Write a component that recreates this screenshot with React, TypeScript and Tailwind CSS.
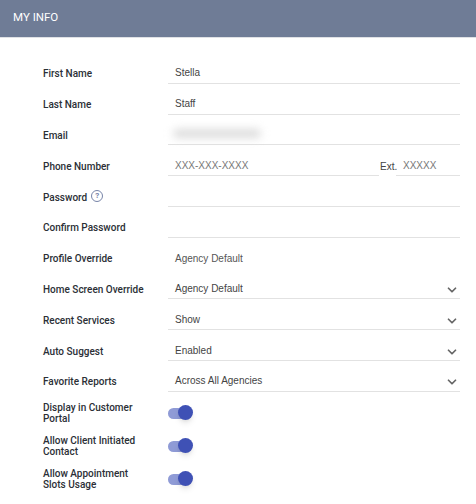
import { ChevronDown } from "lucide-react";

const valueText = "text-[10px] font-['Liberation_Sans',sans-serif]";

function Field({ label, children, icon }: { label: string; children?: React.ReactNode; icon?: boolean }) {
  return (
    <div className="flex h-[30.8px] items-stretch">
      <div className="flex w-[125px] items-center gap-[4px] pt-[11px] text-[10px] font-medium text-[#2b2f36]">
        {label}
        {icon && (
          <span className="mb-[2px] flex h-[12px] w-[12px] items-center justify-center rounded-full border-[1.5px] border-[#7784a8] text-[8px] font-bold text-[#7784a8]">
            ?
          </span>
        )}
      </div>
      {children ?? <div className="flex-1 border-b border-[#e2e2e2]" />}
    </div>
  );
}

function TextValue({ value, muted }: { value?: string; muted?: boolean }) {
  return (
    <div className={`flex flex-1 items-center border-b border-[#e2e2e2] pl-[7px] pt-[10px] ${valueText} ${muted ? "text-[#777]" : "text-[#444]"}`}>
      {value}
    </div>
  );
}

function SelectValue({ value }: { value: string }) {
  return (
    <div className={`flex flex-1 items-center justify-between border-b border-[#e2e2e2] pl-[7px] pr-[1px] pt-[10px] text-[#444] ${valueText}`}>
      {value}
      <ChevronDown size={14} strokeWidth={3} className="mt-[3px] text-[#666]" />
    </div>
  );
}

function Toggle({ label, on = true }: { label: string; on?: boolean }) {
  return (
    <div className="flex h-[33px] items-center">
      <div className="w-[125px] pr-[22px] text-[10px] font-medium leading-[11px] text-[#2b2f36]">{label}</div>
      <div className="relative h-[11px] w-[24px] rounded-full bg-[#8f9bd6]">
        <span className={`absolute top-[-3px] h-[15px] w-[15px] rounded-full shadow-md ${on ? "right-[-1px] bg-[#3f51b5]" : "left-0 bg-white"}`} />
      </div>
    </div>
  );
}

export default function App() {
  return (
    <div className="h-[504px] w-[476px] overflow-hidden bg-white font-['Roboto',sans-serif]">
      <div className="flex h-[38px] items-center border-b border-[#dfe1e5] bg-[#6f7c96] px-[13px] pb-[2px] text-[11.5px] text-white">
        MY INFO
      </div>
      <div className="pl-[43px] pr-[16px] pt-[15px]">
        <Field label="First Name">
          <TextValue value="Stella" />
        </Field>
        <Field label="Last Name">
          <TextValue value="Staff" />
        </Field>
        <Field label="Email">
          <div className="flex flex-1 items-center border-b border-[#e2e2e2] pl-[5px] pt-[9px]">
            <div className="h-[9px] w-[88px] rounded-full bg-[#dcdcdc] blur-[4px]" />
          </div>
        </Field>
        <Field label="Phone Number">
          <div className="flex flex-1">
            <TextValue value="XXX-XXX-XXXX" muted />
            <div className={`flex w-[17px] shrink-0 items-center pl-[1px] pt-[11px] text-[#444] ${valueText}`}>Ext.</div>
            <div className="flex w-[64px] shrink-0">
              <TextValue value="XXXXX" muted />
            </div>
          </div>
        </Field>
        <Field label="Password" icon />
        <Field label="Confirm Password" />
        <Field label="Profile Override">
          <div className={`flex flex-1 items-center pl-[7px] pt-[10px] text-[#555] ${valueText}`}>Agency Default</div>
        </Field>
        <Field label="Home Screen Override">
          <SelectValue value="Agency Default" />
        </Field>
        <Field label="Recent Services">
          <SelectValue value="Show" />
        </Field>
        <Field label="Auto Suggest">
          <SelectValue value="Enabled" />
        </Field>
        <Field label="Favorite Reports">
          <SelectValue value="Across All Agencies" />
        </Field>
        <div className="pt-[5px]">
          <Toggle label="Display in Customer Portal" />
          <Toggle label="Allow Client Initiated Contact" />
          <Toggle label="Allow Appointment Slots Usage" />
          <Toggle label="" on={false} />
        </div>
      </div>
    </div>
  );
}
